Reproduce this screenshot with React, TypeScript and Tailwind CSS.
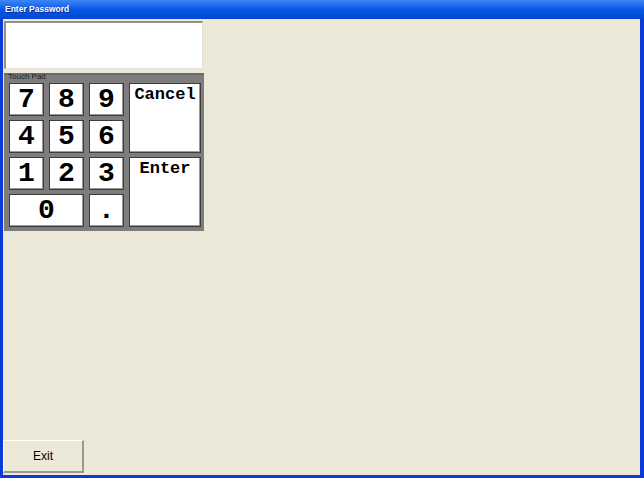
import React from "react";

const keyBase =
  "bg-white border border-[#3c3c3c] shadow-[inset_-1px_-1px_0_#9a9a9a] flex justify-center text-black font-bold";

function Key({ label, className = "" }: { label: string; className?: string }) {
  return (
    <div
      className={`${keyBase} items-center text-[28px] leading-none ${className}`}
      style={{ fontFamily: '"Liberation Mono", "Courier New", monospace' }}
    >
      {label}
    </div>
  );
}

function WideKey({ label, className = "" }: { label: string; className?: string }) {
  return (
    <div
      className={`${keyBase} items-start pt-[2px] text-[17px] leading-none ${className}`}
      style={{ fontFamily: '"Liberation Mono", "Courier New", monospace' }}
    >
      {label}
    </div>
  );
}

export default function App() {
  return (
    <div
      className="w-[644px] h-[478px] flex flex-col bg-[#0a3ad8] overflow-hidden"
      style={{ fontFamily: '"Liberation Sans", Arial, sans-serif' }}
    >
      {/* window caption */}
      <div className="h-[19px] flex items-center px-[5px] bg-gradient-to-b from-[#3d86f5] via-[#0658e8] to-[#0346d2] text-white text-[8.5px] font-bold shrink-0 [text-shadow:1px_1px_0_#0a2a8a]">
        Enter Password
      </div>

      {/* client area */}
      <div className="flex-1 mb-[3px] ml-[3px] mr-[4px] bg-[#ece9d8] flex flex-col pt-[2px] pl-[1px]">
        {/* password box */}
        <div className="w-[199px] h-[48px] bg-white border-t-2 border-l-2 border-t-[#8f8f8f] border-l-[#8f8f8f] border-r border-b border-r-[#e4e2d6] border-b-[#e4e2d6]" />

        {/* touch pad group */}
        <div className="mt-[4px] w-[200px] h-[158px] bg-[#7d7d7d] border-t-2 border-t-[#6a6a6a] relative pl-[5px] pt-[8px]">
          <span className="absolute left-[4px] top-[-3px] text-[8px] leading-[10px] text-[#1a1a1a]">
            Touch Pad
          </span>
          <div className="grid grid-cols-[35px_35px_35px_72px] grid-rows-[33px_33px_33px_33px] gap-x-[5px] gap-y-[4px]">
            <Key label="7" />
            <Key label="8" />
            <Key label="9" />
            <WideKey label="Cancel" className="row-span-2" />
            <Key label="4" />
            <Key label="5" />
            <Key label="6" />
            <Key label="1" />
            <Key label="2" />
            <Key label="3" />
            <WideKey label="Enter" className="row-span-2" />
            <Key label="0" className="col-span-2" />
            <Key label="." />
          </div>
        </div>

        <div className="flex-1" />

        {/* exit button */}
        <div className="mb-[2px] -ml-[1px] w-[81px] h-[33px] bg-[#ece9d8] border-t border-l border-t-white border-l-white border-r-2 border-b-2 border-r-[#9c9a90] border-b-[#9c9a90] flex items-center justify-center">
          <span className="text-[12px] text-black">Exit</span>
        </div>
      </div>
    </div>
  );
}
